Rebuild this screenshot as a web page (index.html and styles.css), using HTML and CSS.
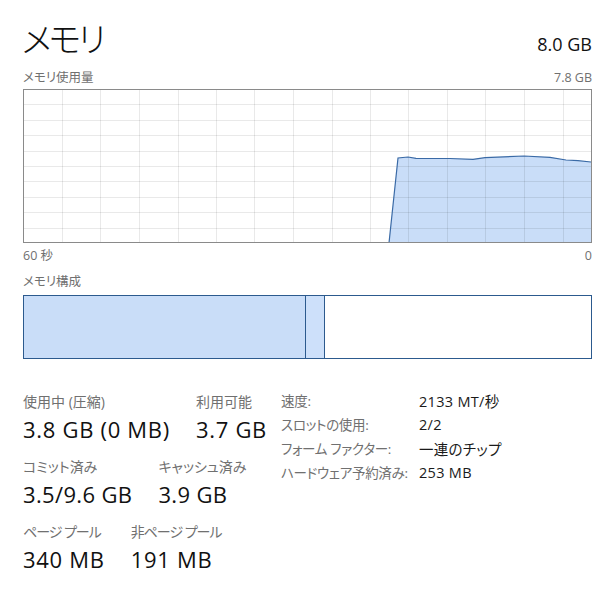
FILE: index.html
```html
<!DOCTYPE html>
<html lang="ja">
<head>
<meta charset="utf-8">
<title>メモリ</title>
<link rel="stylesheet" href="styles.css">
</head>
<body>
<div class="page">
  <div class="head">
    <h1 class="title">メモリ</h1>
    <div class="total">8.0 GB</div>
  </div>
  <div class="sub">
    <span>メモリ使用量</span>
    <span>7.8 GB</span>
  </div>
  <svg class="graph" width="569" height="154" viewBox="0 0 569 154">
    <polygon class="area" points="366,154 375,69 385,68 393,69.3 427,69.5 450,70.3 462,68.7 501,67 527,68.3 543,71 555,71.7 568,73 568,154"/>
    <g class="grid">
      <line x1="39.5" y1="0" x2="39.5" y2="154"/>
      <line x1="77.5" y1="0" x2="77.5" y2="154"/>
      <line x1="116.5" y1="0" x2="116.5" y2="154"/>
      <line x1="155.5" y1="0" x2="155.5" y2="154"/>
      <line x1="193.5" y1="0" x2="193.5" y2="154"/>
      <line x1="231.5" y1="0" x2="231.5" y2="154"/>
      <line x1="270.5" y1="0" x2="270.5" y2="154"/>
      <line x1="309.5" y1="0" x2="309.5" y2="154"/>
      <line x1="347.5" y1="0" x2="347.5" y2="154"/>
      <line x1="385.5" y1="0" x2="385.5" y2="154"/>
      <line x1="424.5" y1="0" x2="424.5" y2="154"/>
      <line x1="462.5" y1="0" x2="462.5" y2="154"/>
      <line x1="501.5" y1="0" x2="501.5" y2="154"/>
      <line x1="540.5" y1="0" x2="540.5" y2="154"/>
      <line x1="0" y1="15.5" x2="569" y2="15.5"/>
      <line x1="0" y1="31.5" x2="569" y2="31.5"/>
      <line x1="0" y1="46.5" x2="569" y2="46.5"/>
      <line x1="0" y1="62.5" x2="569" y2="62.5"/>
      <line x1="0" y1="77.5" x2="569" y2="77.5"/>
      <line x1="0" y1="92.5" x2="569" y2="92.5"/>
      <line x1="0" y1="108.5" x2="569" y2="108.5"/>
      <line x1="0" y1="123.5" x2="569" y2="123.5"/>
      <line x1="0" y1="139.5" x2="569" y2="139.5"/>
    </g>
    <polyline class="stroke" points="366,154 375,69 385,68 393,69.3 427,69.5 450,70.3 462,68.7 501,67 527,68.3 543,71 555,71.7 568,73"/>
    <rect class="frame" x="0.5" y="0.5" width="568" height="153"/>
  </svg>
  <div class="axis">
    <span>60 秒</span>
    <span>0</span>
  </div>
  <div class="label comp-label">メモリ構成</div>
  <div class="comp">
    <div class="seg seg-used"></div>
    <div class="seg seg-mod"></div>
    <div class="seg seg-free"></div>
  </div>
  <div class="stats">
    <div class="left">
      <div class="row">
        <div class="stat"><div class="s-label">使用中 (圧縮)</div><div class="s-value">3.8 GB (0 MB)</div></div>
        <div class="stat"><div class="s-label">利用可能</div><div class="s-value">3.7 GB</div></div>
      </div>
      <div class="row row-commit">
        <div class="stat"><div class="s-label">コミット済み</div><div class="s-value">3.5/9.6 GB</div></div>
        <div class="stat"><div class="s-label">キャッシュ済み</div><div class="s-value">3.9 GB</div></div>
      </div>
      <div class="row row-pool">
        <div class="stat"><div class="s-label">ページ プール</div><div class="s-value">340 MB</div></div>
        <div class="stat"><div class="s-label">非ページ プール</div><div class="s-value">191 MB</div></div>
      </div>
    </div>
    <div class="right">
      <div class="k">速度:</div><div class="v">2133 MT/秒</div>
      <div class="k">スロットの使用:</div><div class="v">2/2</div>
      <div class="k">フォーム ファクター:</div><div class="v">一連のチップ</div>
      <div class="k">ハードウェア予約済み:</div><div class="v">253 MB</div>
    </div>
  </div>
</div>
</body>
</html>
```
FILE: styles.css
```css
* { box-sizing: border-box; }
html, body { margin: 0; padding: 0; background: #ffffff; }
body {
  font-family: "Open Sans", "Noto Sans CJK JP", sans-serif;
  font-feature-settings: "palt";
  color: #1a1a1a;
  width: 613px;
  height: 599px;
  overflow: hidden;
}
.page { padding: 18px 21px 0 23px; }

.head {
  display: flex;
  justify-content: space-between;
  align-items: flex-end;
  height: 40px;
}
.title {
  margin: 0 0 0 -1px;
  font-family: "Noto Sans CJK JP", sans-serif;
  font-size: 34px;
  line-height: 40px;
  font-weight: 300;
  letter-spacing: -3px;
  color: #111;
}
.total {
  font-size: 18px;
  line-height: 22px;
  margin-bottom: 3px;
  color: #111;
}

.sub, .axis {
  display: flex;
  justify-content: space-between;
  font-size: 12.5px;
  line-height: 16px;
  color: #707070;
}
.sub { margin-top: 12px; margin-bottom: 3px; }
.axis { margin-top: 5px; }

.graph { display: block; }
.graph .area { fill: #c9ddf8; }
.graph .grid line { stroke: rgba(0, 0, 0, 0.085); stroke-width: 1; }
.graph .stroke { fill: none; stroke: #3a6aa6; stroke-width: 1.2; }
.graph .frame { fill: none; stroke: #8a8a8a; stroke-width: 1; }

.label { font-size: 12.5px; line-height: 16px; color: #707070; }
.comp-label { margin-top: 10px; }

.comp {
  margin-top: 5px;
  height: 64px;
  width: 569px;
  display: flex;
  border: 1px solid #2c5a8e;
}
.seg { height: 100%; }
.seg-used { width: 282px; background: #c9ddf8; border-right: 1px solid #2c5a8e; }
.seg-mod { width: 19px; background: #cde0fa; border-right: 1px solid #2c5a8e; }
.seg-free { flex: 1; background: #ffffff; }

.stats {
  margin-top: 29px;
  display: flex;
}
.left {
  width: 258px;
  padding-top: 5px;
  display: flex;
  flex-direction: column;
  gap: 15px;
}
.row { display: flex; gap: 26px; }
.stat { display: flex; flex-direction: column; gap: 4px; }
.s-label { font-size: 14px; line-height: 18px; color: #707070; white-space: nowrap; }
.row-pool .s-label { letter-spacing: -1px; }
.s-value { font-size: 22px; line-height: 28px; letter-spacing: 0.7px; color: #111; white-space: nowrap; }
.row-commit .s-value { letter-spacing: 0.35px; }

.right {
  display: grid;
  grid-template-columns: 138px auto;
  grid-auto-rows: 24px;
  align-items: center;
}
.k { font-size: 13.5px; color: #707070; white-space: nowrap; letter-spacing: -0.3px; }
.v { font-size: 14.5px; color: #1a1a1a; white-space: nowrap; letter-spacing: 0.3px; }
```
